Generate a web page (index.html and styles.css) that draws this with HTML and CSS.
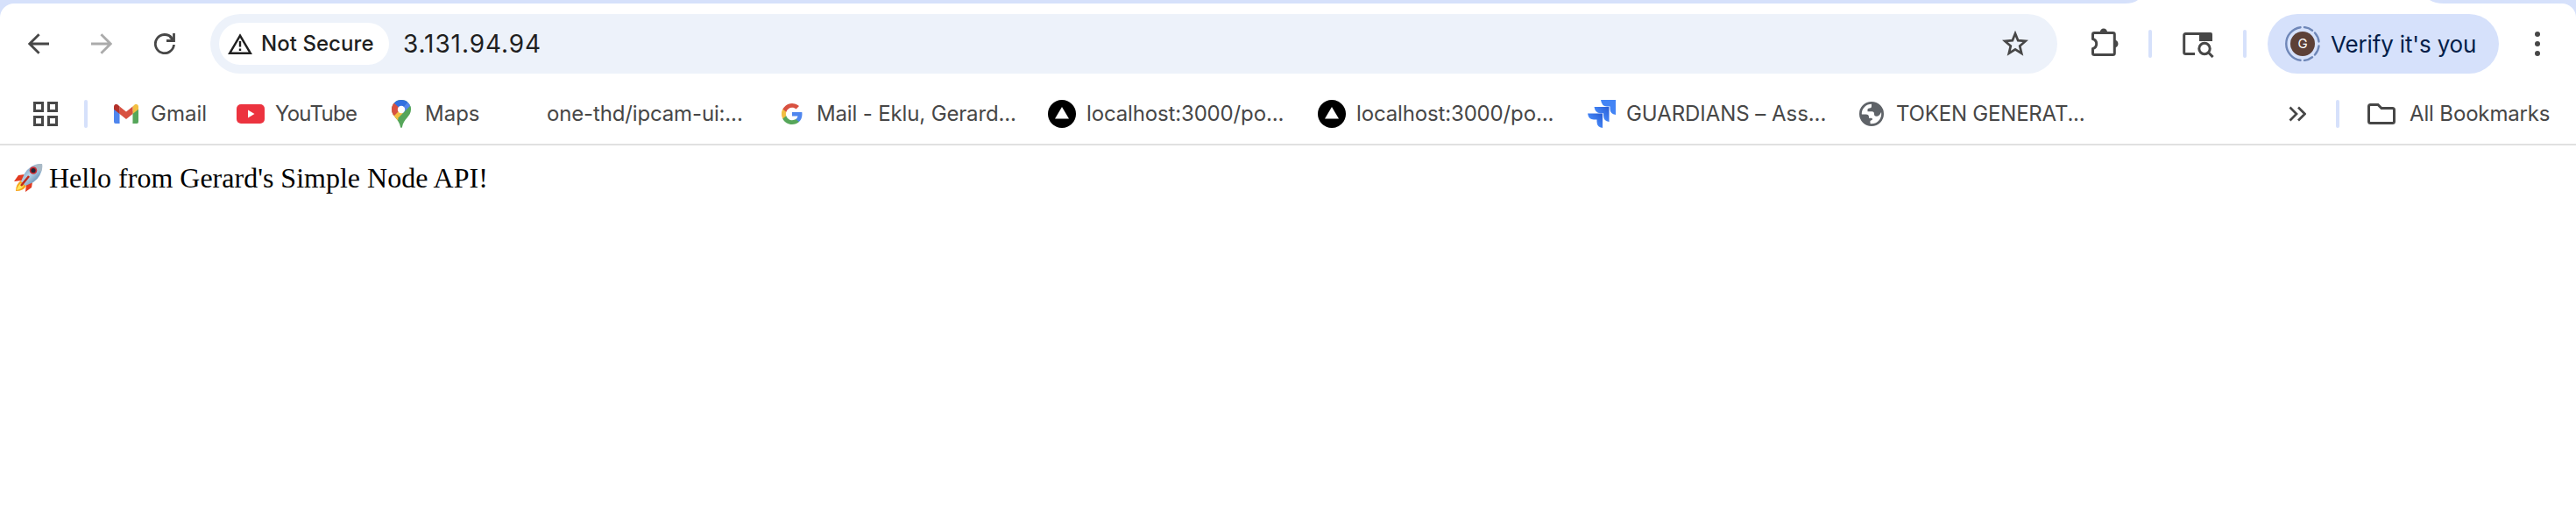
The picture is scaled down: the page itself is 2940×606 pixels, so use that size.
FILE: index.html
```html
<!DOCTYPE html>
<html lang="en">
<head>
<meta charset="utf-8">
<title>3.131.94.94</title>
<link rel="stylesheet" href="styles.css">
</head>
<body>
<div class="browser">
  <div class="tabstrip">
    <svg class="tab-foot" width="364" height="4" viewBox="0 0 364 4"><path d="M0 4Q10 4 15 0H348Q354 4 364 4Z" fill="#fff"/></svg>
  </div>
  <header class="chrome">
    <div class="toolbar">
      <nav class="nav">
        <svg width="24" height="24" viewBox="0 0 24 24" class="line"><path d="M24 12H2M12.600 1.200L1.800 12l10.800 10.800"/></svg>
        <svg width="24" height="24" viewBox="0 0 24 24" class="line faded"><path d="M0 12h22M11.400 1.200L22.200 12 11.400 22.800"/></svg>
        <svg width="24" height="24" viewBox="0 0 24 24" class="line"><path d="M22.500 13A10.600 10.600 0 1 1 20 5.200"/><path d="M22.500 0v8.500H14M22 8l-4-4"/></svg>
      </nav>
      <div class="omnibox">
        <div class="chip">
          <svg width="28" height="24" viewBox="0 0 28 24"><path d="M14 2.600L25.800 22.700H2.200Z" fill="none" stroke="#1f1f1f" stroke-width="2.500"/><path d="M14 9v6.500M14 17.500v2.500" stroke="#1f1f1f" stroke-width="2.400"/></svg>
          <span>Not Secure</span>
        </div>
        <span class="url">3.131.94.94</span>
        <svg class="star" width="30" height="30" viewBox="0 0 30 30"><path d="M15 3.300L18.200 11.200 26.700 11.900 20.200 17.500 22.200 25.900 15 21.400 7.800 25.900 9.800 17.500 3.300 11.900 11.800 11.200Z" fill="none" stroke="#474747" stroke-width="2.700"/></svg>
      </div>
      <svg class="puzzle" width="34" height="34" viewBox="0 0 34 34"><path d="M5.300 6.500H26.500Q28.300 6.500 28.300 8.300V29.700Q28.300 31.500 26.500 31.500H5.300Q3.500 31.500 3.500 29.700V24.500A5.700 5.700 0 0 0 3.500 13.500V8.300Q3.500 6.500 5.300 6.500Z" fill="none" stroke="#474747" stroke-width="3" stroke-linejoin="round"/><path d="M11.700 6a4.200 4.600 0 0 1 8.400 0ZM29 14.700a4.400 4.400 0 0 1 0 8.600Z" fill="#474747"/></svg>
      <i class="sep sep-a"></i>
      <svg class="lens" width="38" height="32" viewBox="0 0 38 32"><path d="M15 27.500H4.500Q2.700 27.500 2.700 25.700V6.500Q2.700 4.500 4.500 4.500H33" fill="none" stroke="#474747" stroke-width="3"/><path d="M20 3H33Q35 3 35 5V13H20Z" fill="#474747"/><circle cx="26" cy="21.500" r="6.200" fill="none" stroke="#474747" stroke-width="3"/><path d="M30 25.500l5.600 5.600" stroke="#474747" stroke-width="3"/></svg>
      <i class="sep sep-b"></i>
      <div class="profile">
        <svg width="40" height="40" viewBox="0 0 40 40"><path d="M17.500 1.200A19 19 0 0 0 17.500 38.800M22 1.100Q27 1.600 31 4.700M34 7.500Q38 12 38.500 17.500M38.500 22.500Q38 28 34 32.500M31 35.300Q27 38.400 22 38.900" fill="none" stroke="#6f87b8" stroke-width="2.400" stroke-linecap="round"/><circle cx="20" cy="20" r="14" fill="#5d4037"/><text x="20" y="25.300" text-anchor="middle" class="initial">G</text></svg>
        <span>Verify it's you</span>
      </div>
      <svg class="dots" width="6" height="28" viewBox="0 0 6 28" fill="#474747"><circle cx="3" cy="3" r="3"/><circle cx="3" cy="14" r="3"/><circle cx="3" cy="25" r="3"/></svg>
    </div>
    <div class="bookmarks">
      <svg class="apps" width="28" height="28" viewBox="0 0 28 28" fill="none" stroke="#474747" stroke-width="3"><path d="M1.500 1.500h9v9h-9zM17.500 1.500h9v9h-9zM1.500 17.500h9v9h-9zM17.500 17.500h9v9h-9z"/></svg>
      <i class="sep sep-c"></i>
      <a class="bm bm-gmail"><svg width="28" height="22" viewBox="0 0 30 22" preserveAspectRatio="none"><path d="M0 4V20q0 2 2 2h5V8z" fill="#4f86ee"/><path d="M30 4V20q0 2-2 2h-5V8z" fill="#56a65a"/><path d="M23 2.500V11l7-5.300V3c0-3-3-4-5-2.300z" fill="#f2bf42"/><path d="M7 11V2.500l8 6 8-6V11l-8 6z" fill="#d85140"/><path d="M0 3v2.700L7 11V2.500L5 .7C3-.9 0 0 0 3z" fill="#b3312a"/></svg><span>Gmail</span></a>
      <a class="bm bm-youtube"><svg width="32" height="22" viewBox="0 0 32 22"><rect width="32" height="22" rx="5" fill="#ec333f"/><path d="M13 6.500v9l7.500-4.500z" fill="#fff"/></svg><span>YouTube</span></a>
      <a class="bm bm-maps"><svg width="22" height="32" viewBox="0 0 22 32"><defs><clipPath id="pin"><path d="M11 0C4.800 0 0 4.900 0 11c0 8 8.500 10.500 10 20q1 2 2 0C13.500 21.500 22 19 22 11 22 4.900 17.200 0 11 0z"/></clipPath></defs><g clip-path="url(#pin)"><path d="M0 0h22v32H0z" fill="#56a65a"/><path d="M-1 17L8 8l8 5L4 26z" fill="#f2bf42"/><path d="M-1 3h4l8 7-8 8-4-3z" fill="#d85140"/><path d="M2 3L8-1H22L11 11z" fill="#3170e0"/><path d="M11 11L19 2l3 5-9 9z" fill="#5487ed"/><path d="M22 6v5L10 24 7 21z" fill="#56a65a"/></g><circle cx="11" cy="11" r="4.200" fill="#fff"/></svg><span>Maps</span></a>
      <a class="bm bm-repo"><span>one-thd/ipcam-ui:...</span></a>
      <a class="bm bm-mail"><svg width="24" height="24" viewBox="0 0 24 24"><path fill="#4f86ee" d="M23.500 12.300c0-.9-.1-1.500-.2-2.300H12v4.500h6.500c-.3 1.500-1.100 2.800-2.400 3.600v3h3.900c2.300-2.100 3.500-5.200 3.500-8.800z"/><path fill="#56a65a" d="M12 24c3.200 0 6-1.100 8-2.900l-3.900-3c-1.100.7-2.500 1.200-4.100 1.200-3.100 0-5.800-2.100-6.700-5H1.300v3.100C3.300 21.300 7.300 24 12 24z"/><path fill="#f2bf42" d="M5.300 14.300a7.200 7.200 0 0 1 0-4.600V6.600h-4a12 12 0 0 0 0 10.800z"/><path fill="#d85140" d="M12 4.700c1.800 0 3.300.6 4.600 1.800L20 3.100A12 12 0 0 0 1.300 6.600l4 3.100c.9-2.900 3.600-5 6.700-5z"/></svg><span>Mail - Eklu, Gerard...</span></a>
      <a class="bm bm-local"><svg width="32" height="32" viewBox="0 0 32 32"><circle cx="16" cy="16" r="16"/><path d="M16 8l8 13.500H8z" fill="#fff"/></svg><span>localhost:3000/po...</span></a>
      <a class="bm bm-local"><svg width="32" height="32" viewBox="0 0 32 32"><circle cx="16" cy="16" r="16"/><path d="M16 8l8 13.500H8z" fill="#fff"/></svg><span>localhost:3000/po...</span></a>
      <a class="bm bm-jira"><svg width="32" height="32" viewBox="0 0 32 32"><defs><linearGradient id="jg" x1="1" y1="0" x2="0.300" y2=".7"><stop offset=".1" stop-color="#2a5fd6"/><stop offset=".8" stop-color="#4384f5"/></linearGradient></defs><path d="M15 0h17v17q-6.500-1-6.500-7V7.500H22Q16 7.500 15 0z" fill="#4384f5"/><path d="M7.500 8h17v17q-6.500-1-6.500-7v-2.700h-3.500q-6 0-7-7.300z" fill="url(#jg)"/><path d="M0 15.500h17V32q-6.500-1-6.500-7v-2.500H7q-6 0-7-7z" fill="url(#jg)"/></svg><span>GUARDIANS – Ass...</span></a>
      <a class="bm bm-token"><svg width="28" height="28" viewBox="0 0 28 28"><circle cx="14" cy="14" r="12.600" fill="#fff"/><path d="M14 1.500V5Q14 7.500 11.500 7.500T9.500 10V11.300H14.500Q17 11.300 17 14T19.500 16.800Q23.300 16.500 24.700 12.500L27 11 23 4 16 1ZM1.500 14.500H7.500Q11 14.500 11 17.800V18.800H13.500Q15.500 18.800 15 20.500L12.500 22V26.500L7 26 2 20Z" fill="#5f6368"/><circle cx="14" cy="14" r="12.600" fill="none" stroke="#5f6368" stroke-width="2.800"/></svg><span>TOKEN GENERAT...</span></a>
      <svg class="more" width="20" height="18" viewBox="0 0 20 18"><path d="M1.500 1.500L9 9l-7.500 7.500M11 1.500L18.500 9 11 16.500" fill="none" stroke="#474747" stroke-width="2.700"/></svg>
      <i class="sep sep-d"></i>
      <a class="bm bm-all"><svg width="32" height="24" viewBox="0 0 32 24"><path d="M3.500 1.500H12l4 4H28.500q2 0 2 2v13q0 2-2 2H3.500q-2 0-2-2V3.500q0-2 2-2z" fill="none" stroke="#474747" stroke-width="3"/></svg><span>All Bookmarks</span></a>
    </div>
  </header>
  <main class="page">
    <svg class="rocket" width="33" height="32" viewBox="0 0 33 32"><defs><linearGradient id="hull" x1="0" y1="0" x2="1" y2="1"><stop offset="0" stop-color="#3e78ad"/><stop offset=".45" stop-color="#b9d3e6"/><stop offset="1" stop-color="#2f6496"/></linearGradient></defs><path d="M12 12L5 13 0 20l9-1zM21 21l-1 6-7 5 1-9z" fill="#e23b21"/><path d="M8 19Q2 23 2 31q9 0 12-6z" fill="#f7a51d"/><path d="M8 22q-4 3-5 8 6-1 8-5z" fill="#ffe75b"/><path d="M32 0Q20-1 12 11l-4 9 5 5 9-4Q33 13 32 0z" fill="url(#hull)"/><path d="M32 0q-5-.5-9 2 2 5 8 7 2-4 1-9z" fill="#a9b9c6"/><circle cx="22" cy="7.500" r="4.300" fill="#c92a31"/><circle cx="22" cy="7.500" r="2.600" fill="#1d2535"/><path d="M17 14l-9 11" stroke="#bf2a1c" stroke-width="2.500"/></svg>
    <span>Hello from Gerard's Simple Node API!</span>
  </main>
</div>
</body>
</html>
```
FILE: styles.css
```css
* { box-sizing: border-box; }
body { margin: 0; background: #fff; font-family: Inter, "Liberation Sans", sans-serif; }
svg { display: block; flex: none; }
.browser { width: 2940px; height: 606px; overflow: hidden; background: #fff; }
.tabstrip { height: 4px; background: #d6e1fb; padding-left: 2425px; }
.chrome { height: 162px; background: linear-gradient(#d6e1fb 30px, #fff 30px); border-bottom: 2px solid #e1e1e1; }
.toolbar { height: 96px; display: flex; align-items: center; background: #fff; border-radius: 16px 16px 0 0; padding: 0 0 4px 32px; }
.nav { display: flex; gap: 48px; width: 208px; }
.line { fill: none; stroke: #474747; stroke-width: 2.800; }
.faded { stroke: #ababab; }
.omnibox { width: 2108px; height: 68px; border-radius: 34px; background: #edf2fa; display: flex; align-items: center; padding: 0 33px 0 10px; color: #1f1f1f; }
.chip { width: 194px; height: 48px; border-radius: 24px; background: #fff; display: flex; align-items: center; gap: 10px; padding-left: 10px; font-size: 24px; font-weight: 500; white-space: nowrap; }
.chip span { padding-bottom: 2px; letter-spacing: 0.05px; }
.url { margin-left: 16px; font-size: 28px; letter-spacing: 0.9px; }
.star { margin-left: auto; }
.puzzle { margin: -4px 0 0 37px; }
.sep { width: 4px; height: 32px; border-radius: 2px; background: #d6e1fb; flex: none; }
.sep-a { margin-left: 33px; }
.lens { margin-left: 34px; }
.sep-b { margin-left: 32px; }
.profile { margin-left: 24px; width: 264px; height: 68px; border-radius: 34px; background: #d6e1fb; display: flex; align-items: center; gap: 12px; padding-left: 20px; font-size: 26px; letter-spacing: -0.15px; color: #041e49; white-space: nowrap; }
.initial { font-size: 15px; fill: #fff; }
.dots { margin-left: 41px; }
.bookmarks { height: 64px; display: flex; align-items: center; padding: 0 0 4px 38px; background: #fff; font-size: 24px; color: #474747; }
.bm { display: flex; align-items: center; flex: none; white-space: nowrap; }
.bm span { padding-bottom: 2px; }
.sep-c { margin: 0 30px 0 30px; }
.bm-gmail { width: 140px; gap: 14px; }
.bm-youtube { width: 177px; gap: 12px; letter-spacing: -0.75px; }
.bm-maps { width: 177px; gap: 16px; }
.bm-repo { width: 268px; letter-spacing: -0.15px; }
.bm-mail { width: 304px; gap: 16px; letter-spacing: -0.15px; }
.bm-local { width: 308px; gap: 12px; letter-spacing: -0.15px; }
.bm-jira { width: 310px; gap: 12px; letter-spacing: -0.05px; }
.bm-token { width: 490px; gap: 14px; letter-spacing: -0.2px; }
.sep-d { margin: 0 32px 0 34px; }
.bm-all { gap: 16px; letter-spacing: -0.15px; }
.page { padding: 19px 0 0 16px; display: flex; font: 32px/37px "Liberation Serif", serif; color: #000; }
.rocket { margin-top: 2px; }
.page span { margin-left: 7px; white-space: nowrap; }
```
